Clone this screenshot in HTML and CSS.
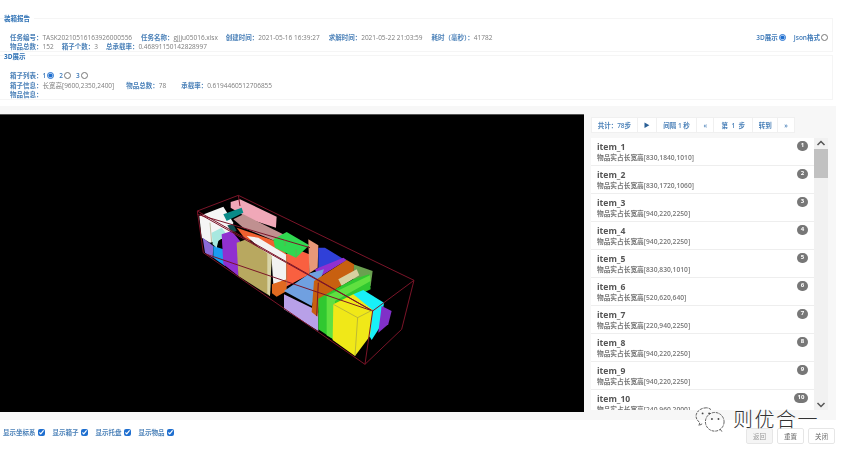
FILE: index.html
```html
<!DOCTYPE html>
<html lang="zh">
<head>
<meta charset="utf-8">
<title>装箱报告</title>
<link rel="stylesheet" href="styles.css">
</head>
<body>
<div class="page">
  <section class="panel report">
    <h2 class="panel-title">装箱报告</h2>
    <div class="panel-body report-body">
      <div class="info">
        <div class="row">
          <span class="field f1"><b>任务编号：</b>TASK20210516163926000556</span>
          <span class="field f2"><b>任务名称：</b>gjjju05016.xlsx</span>
          <span class="field f3"><b>创建时间：</b>2021-05-16 16:39:27</span>
          <span class="field f4"><b>求解时间：</b>2021-05-22 21:03:59</span>
          <span class="field"><b>耗时（毫秒）：</b>41782</span>
        </div>
        <div class="row">
          <span class="field f5"><b>物品总数：</b>152</span>
          <span class="field f5"><b>箱子个数：</b>3</span>
          <span class="field"><b>总承载率：</b>0.46891150142828997</span>
        </div>
      </div>
      <div class="modes">
        <label class="opt">3D展示<input type="radio" name="mode" checked></label>
        <label class="opt">Json格式<input type="radio" name="mode"></label>
      </div>
    </div>
  </section>

  <section class="panel show">
    <h2 class="panel-title">3D展示</h2>
    <div class="panel-body">
      <div class="row"><span class="field"><b>箱子列表：</b></span>
        <label class="opt box-opt">1<input type="radio" name="box" checked></label>
        <label class="opt box-opt">2<input type="radio" name="box"></label>
        <label class="opt box-opt">3<input type="radio" name="box"></label>
      </div>
      <div class="row">
        <span class="field f6"><b>箱子信息：</b>长宽高[9600,2350,2400]</span>
        <span class="field f7"><b>物品总数：</b>78</span>
        <span class="field"><b>承载率：</b>0.6194460512706855</span>
      </div>
      <div class="row"><span class="field"><b>物品信息：</b></span></div>
    </div>
  </section>

  <main class="stage">
    <div class="canvas">
      <svg class="scene" viewBox="0 0 584 298" aria-label="3D装箱视图">
        <g transform="translate(190 71) scale(.3333)">
          <polygon fill="#f0a8b8" points="122,48 150,40 260,92 258,125 180,100 122,65"/>
          <polygon fill="#f5f5f5" points="28,90 100,62 130,110 120,150 60,170 35,155"/>
          <polygon fill="#8a6ad8" points="38,155 70,180 68,215 45,200"/>
          <polygon fill="#1a9cf0" points="70,180 100,190 105,240 70,215"/>
          <polygon fill="#a8e8e0" points="65,140 95,125 110,145 85,165 80,185 68,175"/>
          <polygon fill="#0a8a88" points="100,85 155,65 160,80 110,105"/>
          <polygon fill="#125050" points="112,118 130,115 140,135 125,140"/>
          <polygon fill="#c09090" points="130,100 160,85 290,150 255,165 160,125"/>
          <polygon fill="#f06030" points="140,125 255,165 295,210 205,160 170,165"/>
          <polygon fill="#9030d0" points="95,145 125,135 150,165 145,270 100,235"/>
          <polygon fill="#f2f2f2" points="170,150 205,155 292,208 292,282 250,295 245,220"/>
          <polygon fill="#b8a860" points="140,170 170,160 245,210 240,330 145,270"/>
          <polygon fill="#d8d4a8" points="232,200 245,210 240,330 232,322"/>
          <polygon fill="#e06a20" points="246,295 290,280 290,315 260,332 246,322"/>
          <polygon fill="#f96040" points="288,205 320,190 358,205 358,265 288,302"/>
          <polygon fill="#30d850" points="250,160 290,138 358,178 318,215 255,185"/>
          <polygon fill="#e89878" points="355,160 385,178 383,245 358,262"/>
          <polygon fill="#3040d8" points="385,185 405,185 470,225 385,262"/>
          <polygon fill="#9030d0" points="375,250 460,215 470,222 385,275"/>
          <polygon fill="#6aa050" points="490,235 548,255 542,300 490,300"/>
          <polygon fill="#70a0e0" points="282,315 360,262 402,250 385,300 365,360"/>
          <polygon fill="#b8a0e8" points="282,325 365,365 385,380 385,435 282,370"/>
          <polygon fill="#c86010" points="372,285 470,222 492,235 490,275 390,340 382,392 365,378"/>
          <polygon fill="#d8d0a0" points="445,280 500,250 508,268 455,300"/>
          <polygon fill="#30c830" points="385,338 435,310 490,280 538,265 542,310 445,355 430,460 385,430"/>
          <polygon fill="#60e040" points="410,330 540,268 542,285 435,345 430,460 410,448"/>
          <polygon fill="#18f0f8" points="490,325 520,312 582,350 572,420 545,462 510,400"/>
          <polygon fill="#8030c8" points="575,360 605,375 595,415 565,440"/>
          <polygon fill="#f0e818" points="430,355 490,325 548,372 540,450 495,510 428,462"/>
          <g class="edges">
            <path d="M22 75 145 28 672 283 548 375ZM22 75 40 200 525 535 635 430 672 283M548 375 525 535M30 85 548 375M22 85 360 185M50 205 548 375M145 28 150 60M385 290 380 390"/>
          </g>
          <path class="seams" d="M503 395 495 510M503 395 430 355M503 395 548 372M65 170 60 110M290 300 290 210M318 215 318 190M285 180 285 160"/>
        </g>
      </svg>
    </div>

    <aside class="side">
      <nav class="pager">
        <span class="cell c1">共计：78步</span>
        <span class="cell c2">▶</span>
        <span class="cell c3">间隔&nbsp;1&nbsp;秒</span>
        <span class="cell c4">«</span>
        <span class="cell c5">第&nbsp;&nbsp;1&nbsp;&nbsp;步</span>
        <span class="cell c6">转到</span>
        <span class="cell c7">»</span>
      </nav>
      <div class="list-wrap">
        <ul class="list">
          <li class="item"><div><div class="name">item_1</div><div class="dims">物品实占长宽高[830,1840,1010]</div></div><span class="badge">1</span></li>
          <li class="item"><div><div class="name">item_2</div><div class="dims">物品实占长宽高[830,1720,1060]</div></div><span class="badge">2</span></li>
          <li class="item"><div><div class="name">item_3</div><div class="dims">物品实占长宽高[940,220,2250]</div></div><span class="badge">3</span></li>
          <li class="item"><div><div class="name">item_4</div><div class="dims">物品实占长宽高[940,220,2250]</div></div><span class="badge">4</span></li>
          <li class="item"><div><div class="name">item_5</div><div class="dims">物品实占长宽高[830,830,1010]</div></div><span class="badge">5</span></li>
          <li class="item"><div><div class="name">item_6</div><div class="dims">物品实占长宽高[520,620,640]</div></div><span class="badge">6</span></li>
          <li class="item"><div><div class="name">item_7</div><div class="dims">物品实占长宽高[220,940,2250]</div></div><span class="badge">7</span></li>
          <li class="item"><div><div class="name">item_8</div><div class="dims">物品实占长宽高[940,220,2250]</div></div><span class="badge">8</span></li>
          <li class="item"><div><div class="name">item_9</div><div class="dims">物品实占长宽高[940,220,2250]</div></div><span class="badge">9</span></li>
          <li class="item"><div><div class="name">item_10</div><div class="dims">物品实占长宽高[240,960,2000]</div></div><span class="badge wide">10</span></li>
        </ul>
        <div class="scrollbar">
          <svg class="arrow" viewBox="0 0 14 10"><path d="M3.5 6.5 7 3l3.5 3.5"/></svg>
          <div class="thumb"></div>
          <div class="track"></div>
          <svg class="arrow" viewBox="0 0 14 10"><path d="M3.5 3.5 7 7l3.5-3.5"/></svg>
        </div>
      </div>
    </aside>
  </main>

  <footer class="footer">
    <div class="checks">
      <label class="check">显示坐标系<input type="checkbox" checked></label>
      <label class="check">显示箱子<input type="checkbox" checked></label>
      <label class="check">显示托盘<input type="checkbox" checked></label>
      <label class="check">显示物品<input type="checkbox" checked></label>
    </div>
    <div class="buttons">
      <button class="btn muted">返回</button>
      <button class="btn">重置</button>
      <button class="btn">关闭</button>
    </div>
  </footer>

  <div class="watermark">
    <svg class="wechat" viewBox="0 0 34 30">
      <path d="M12 3C6 3 1 7 1 12c0 3 2 5 4 7l-1 3 4-2"/>
      <path d="M17 5c-1-1-3-2-5-2"/>
      <circle cx="21" cy="18" r="10"/>
      <path d="M27 26l2 3"/>
      <circle class="dot" cx="8" cy="9" r="1"/><circle class="dot" cx="15" cy="9" r="1"/>
      <circle class="dot" cx="18" cy="15" r="1"/><circle class="dot" cx="25" cy="15" r="1"/>
    </svg>
    <span class="mark-text">则优合一</span>
  </div>
</div>
</body>
</html>
```
FILE: styles.css
```css
* { box-sizing: border-box; }
html, body { margin: 0; padding: 0; background: #fff; }
body { width: 844px; height: 456px; overflow: hidden; }

.page {
  position: relative;
  width: 844px;
  height: 456px;
  padding-top: 14px;
  font-family: "Open Sans", "Noto Sans CJK SC", sans-serif;
  font-size: 6.5px;
  line-height: 9px;
  color: #7d7d7d;
}

.panel, .side, .footer { filter: blur(.3px); }

.panel { position: relative; width: 833px; border: 1px solid #f5f5f5; border-left: 0; }
.panel-title {
  position: absolute;
  left: 4px;
  top: -5px;
  margin: 0;
  padding-right: 4px;
  background: #fff;
  font-size: 6.5px;
  line-height: 9px;
  font-weight: 700;
  color: #2f72b5;
}
.show .panel-title { top: -4px; }
.report { height: 34px; margin-top: 4px; }
.show { height: 45px; margin-top: 3px; }
.panel-body { padding: 14px 0 0 10px; }
.show .panel-body { padding-top: 15px; }
.report-body { display: flex; justify-content: space-between; padding-top: 14px; padding-right: 4px; }

.row { display: flex; align-items: center; height: 9px; white-space: nowrap; }
.show .row { height: 9.5px; }
.field b { font-weight: 600; color: #4a80b8; }
.f1 { margin-right: 9px; }
.f2 { margin-right: 8px; }
.f3 { margin-right: 9px; }
.f4 { margin-right: 9px; }
.f5 { margin-right: 8px; }
.f6 { margin-right: 12px; }
.f7 { margin-right: 15px; }

.modes { display: flex; gap: 8px; }
.opt { display: inline-flex; align-items: center; font-weight: 600; color: #3f7ab8; height: 9px; }
.box-opt { margin-right: 5px; }
input[type="radio"], input[type="checkbox"] {
  width: 7px;
  height: 7px;
  margin: 0 0 0 1px;
  accent-color: #1f6fd0;
}

.stage {
  display: flex;
  height: 314px;
  width: 836px;
  margin-top: 6px;
  padding-top: 8px;
  background: #f7f7f7;
}
.canvas { flex: 0 0 584px; height: 298px; background: #000; border-top: 1px solid #555; }
.scene { display: block; width: 584px; height: 298px; filter: blur(.5px); }
.scene polygon { stroke: none; }
.edges path { fill: none; stroke: #7a1428; stroke-width: 3; }
.seams { fill: none; stroke: #8a8a50; stroke-width: 1.5; }

.side { flex: 1; padding: 3px 8px 0 7px; display: flex; flex-direction: column; gap: 5px; }
.pager { display: flex; height: 16px; width: 204px; background: #fff; border: 1px solid #f0f0f0; }
.cell {
  display: flex;
  align-items: center;
  justify-content: center;
  border-right: 1px solid #f0f0f0;
  font-size: 6.5px;
  font-weight: 600;
  color: #4a80b8;
  white-space: nowrap;
}
.cell:last-child { border-right: 0; }
.c1 { width: 46px; }
.c2 { width: 19px; color: #2a5f96; font-size: 6px; }
.c3 { width: 41px; }
.c4 { width: 17px; }
.c5 { width: 39px; }
.c6 { width: 25px; }
.c7 { width: 16px; }

.list-wrap { display: flex; height: 272px; }
.list {
  flex: 0 0 223px;
  margin: 0;
  padding: 0;
  list-style: none;
  overflow: hidden;
  background: #fff;
}
.item {
  display: flex;
  justify-content: space-between;
  align-items: flex-start;
  height: 28px;
  padding: 2.5px 6px 0 6px;
  border-bottom: 1px solid #eee;
}
.name { font-size: 8.6px; line-height: 12.5px; font-weight: 700; color: #555; }
.dims { font-size: 6.7px; line-height: 9px; font-weight: 600; color: #777; white-space: nowrap; }
.badge {
  display: flex;
  align-items: center;
  justify-content: center;
  min-width: 11px;
  height: 10px;
  margin-top: 0;
  border-radius: 6px;
  background: #777;
  color: #fff;
  font-size: 6px;
  font-weight: 700;
}
.badge.wide { min-width: 14px; }

.scrollbar { display: flex; flex-direction: column; flex: 0 0 14px; background: #f1f1f1; }
.arrow { display: block; width: 14px; height: 11px; flex: none; }
.arrow path { fill: none; stroke: #555; stroke-width: 1.5; }
.thumb { height: 29px; background: #c1c1c1; flex: none; }
.track { flex: 1; }

.footer {
  display: flex;
  justify-content: space-between;
  align-items: flex-start;
  width: 835px;
  padding: 8px 0 0 3px;
}
.checks { display: flex; gap: 8px; }
.check { display: inline-flex; align-items: center; gap: 1px; font-weight: 600; color: #4a80b8; height: 9px; }
.buttons { display: flex; gap: 4px; }
.btn {
  width: 27px;
  height: 16px;
  padding: 0;
  background: #fff;
  border: 1px solid #e6e6e6;
  border-radius: 2px;
  font: 6.5px "Open Sans", "Noto Sans CJK SC", sans-serif;
  color: #666;
}
.btn.muted { background: #f5f5f5; color: #999; }

/* The watermark sits over the list and the footer. */
.watermark {
  position: absolute;
  left: 695px;
  top: 405px;
  display: flex;
  align-items: center;
  gap: 6px;
}
.wechat { width: 32px; height: 28px; fill: none; stroke: #444; stroke-width: .9; stroke-dasharray: 3 1; }
.wechat .dot { fill: #444; stroke: none; }
.mark-text {
  font-family: "Noto Sans CJK SC", sans-serif;
  font-size: 20px;
  line-height: 26px;
  font-weight: 300;
  letter-spacing: 1.5px;
  color: #333;
  text-shadow: 0 0 2px #fff;
}
```
